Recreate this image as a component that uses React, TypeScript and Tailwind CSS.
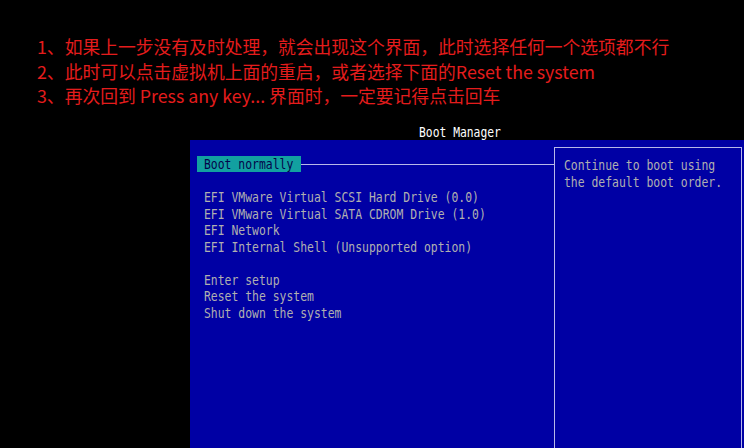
import React from "react";

const mono = { fontFamily: '"DejaVu Sans Mono", "Liberation Mono", monospace' };

function T({ children }: { children: React.ReactNode }) {
  return <span className="inline-block origin-left scale-x-[0.84]">{children}</span>;
}

export default function App() {
  const rows: (string | null)[] = [
    null,
    "EFI VMware Virtual SCSI Hard Drive (0.0)",
    "EFI VMware Virtual SATA CDROM Drive (1.0)",
    "EFI Network",
    "EFI Internal Shell (Unsupported option)",
    null,
    "Enter setup",
    "Reset the system",
    "Shut down the system",
  ];
  return (
    <div className="w-[744px] h-[448px] bg-black overflow-hidden flex flex-col">
      <div
        className="pl-[37px] pt-[34px] text-[17.8px] leading-[24.5px] text-[#e41c1c]"
        style={{ fontFamily: '"Noto Sans CJK SC", "Noto Sans", sans-serif' }}
      >
        <div>1、如果上一步没有及时处理，就会出现这个界面，此时选择任何一个选项都不行</div>
        <div>2、此时可以点击虚拟机上面的重启，或者选择下面的Reset the system</div>
        <div>3、再次回到 Press any key... 界面时，一定要记得点击回车</div>
      </div>
      <div
        className="mt-[16.5px] pl-[419px] h-[16px] leading-[16px] text-[13.5px] text-white whitespace-pre"
        style={mono}
      >
        <T>Boot Manager</T>
      </div>
      <div
        className="ml-[190px] flex-1 bg-[#0000a4] flex text-[13.6px] leading-[16.5px] text-[#b0b0b0] whitespace-pre"
        style={mono}
      >
        <div className="w-[364px] pt-[16px] pl-[7px] flex flex-col">
          <div className="flex items-center h-[16.5px]">
            <span className="bg-[#12a0a0] text-[#04044a] pl-[7px] w-[104px] h-[16px] leading-[16px] overflow-hidden">
              <T>Boot normally</T>
            </span>
            <div className="flex-1 h-px bg-[#b8b8e8]" />
          </div>
          {rows.map((r, i) => (
            <div key={i} className="h-[16.5px] pl-[7px]">
              <T>{r ?? ""}</T>
            </div>
          ))}
        </div>
        <div className="mt-[7px] w-[188px] border-l border-t border-r border-[#b8b8e8] pl-[9px] pt-[9px]">
          <div className="h-[16.5px]"><T>Continue to boot using</T></div>
          <div className="h-[16.5px]"><T>the default boot order.</T></div>
        </div>
      </div>
    </div>
  );
}
